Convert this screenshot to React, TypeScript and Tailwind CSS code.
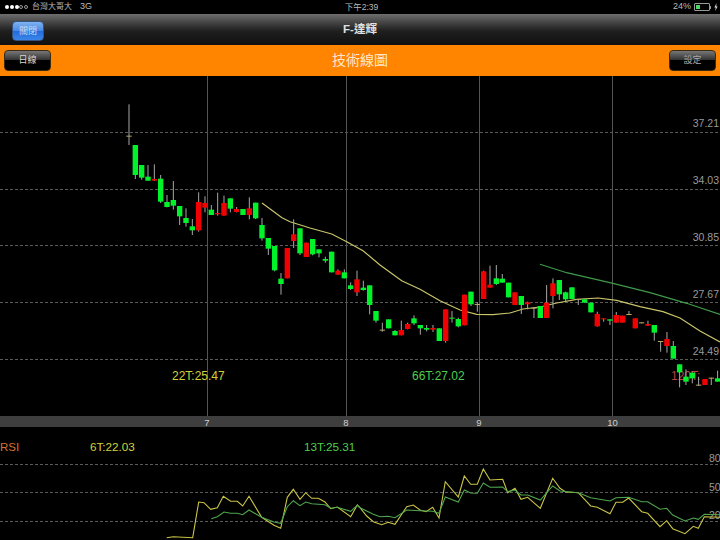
import React from "react";

const FONT = "font-['Liberation_Sans','Noto_Sans_CJK_TC',sans-serif]";
const UP = "#00f22a";
const DOWN = "#f00000";
const TAN = "#b5a66a";

// [x, wickTop, wickBottom, bodyTop, bodyBottom, colour] in page pixels
type Candle = [number, number, number, number, number, string];

// values below are read off the 3x crops, so convert them back
const fromCrop = (oy: number, rows: [number, number, number, number, string][], startX: number): Candle[] =>
  rows.map((r, i) => [startX + i * 6.333, oy + r[0] / 3, oy + r[1] / 3, oy + r[2] / 3, oy + r[3] / 3, r[4]]);

const candles: Candle[] = [
  ...fromCrop(95, [
    [28, 150, 122, 124, TAN],
    [150, 252, 150, 240, UP],
    [210, 254, 210, 248, UP],
    [210, 258, 245, 257, UP],
    [208, 258, 252, 257, DOWN],
    [240, 324, 251, 320, UP],
    [300, 337, 321, 336, UP],
    [258, 344, 315, 332, UP],
    [333, 390, 333, 364, UP],
    [340, 395, 369, 384, UP],
    [372, 420, 394, 406, UP],
    [292, 410, 321, 406, DOWN],
    [304, 352, 324, 338, DOWN],
    [330, 360, 344, 360, UP],
    [293, 362, 354, 358, DOWN],
    [302, 362, 324, 362, DOWN],
    [310, 352, 310, 341, UP],
    [336, 352, 342, 351, DOWN],
    [342, 360, 342, 360, UP],
    [307, 373, 340, 360, DOWN],
    [323, 372, 323, 370, UP],
    [369, 437, 390, 430, UP],
    [429, 480, 429, 461, UP],
    [453, 529, 453, 526, UP],
    [534, 599, 551, 567, UP],
    [459, 550, 459, 550, DOWN],
    [373, 459, 418, 438, DOWN],
  ], 129),
  ...fromCrop(210, [
    [55, 135, 55, 130, UP],
    [98, 141, 98, 141, DOWN],
    [87, 136, 87, 133, UP],
    [118, 142, 118, 130, UP],
    [140, 158, 147, 152, UP],
    [125, 187, 125, 187, UP],
    [178, 195, 182, 194, DOWN],
    [178, 205, 187, 205, UP],
    [217, 240, 226, 237, UP],
    [182, 258, 208, 247, DOWN],
    [212, 242, 233, 240, UP],
    [226, 313, 226, 285, UP],
    [303, 338, 303, 332, UP],
    [338, 365, 359, 361, TAN],
    [328, 355, 328, 355, UP],
    [360, 376, 363, 376, UP],
    [332, 376, 360, 376, DOWN],
    [338, 358, 342, 357, DOWN],
    [316, 345, 325, 340, UP],
    [345, 374, 345, 355, UP],
    [345, 364, 354, 359, UP],
    [345, 366, 354, 359, DOWN],
    [355, 393, 355, 393, UP],
    [298, 398, 298, 393, DOWN],
    [303, 338, 323, 326, UP],
    [323, 352, 327, 349, UP],
    [254, 346, 254, 346, DOWN],
    [245, 288, 245, 283, UP],
    [277, 305, 282, 285, TAN],
    [182, 267, 184, 267, DOWN],
    [167, 233, 224, 233, DOWN],
    [165, 225, 205, 222, UP],
  ], 300),
  ...fromCrop(250, [
    [72, 98, 86, 98, UP],
    [98, 142, 98, 142, UP],
    [127, 165, 127, 165, DOWN],
    [138, 192, 138, 165, UP],
    [155, 178, 157, 163, DOWN],
    [172, 204, 173, 176, TAN],
    [168, 204, 168, 204, UP],
    [105, 204, 158, 204, DOWN],
    [85, 175, 100, 138, DOWN],
    [90, 150, 90, 133, UP],
    [125, 155, 127, 148, UP],
    [112, 148, 112, 147, UP],
    [147, 165, 147, 149, TAN],
    [148, 158, 148, 158, UP],
    [158, 187, 158, 187, UP],
    [185, 230, 192, 229, DOWN],
    [205, 215, 205, 207, DOWN],
    [208, 225, 208, 212, UP],
    [186, 218, 195, 218, DOWN],
    [197, 218, 197, 218, DOWN],
    [183, 193, 192, 194, TAN],
    [205, 235, 205, 235, DOWN],
    [217, 220, 217, 220, TAN],
    [212, 228, 222, 227, DOWN],
    [225, 272, 225, 248, UP],
    [273, 305, 273, 275, TAN],
    [246, 308, 267, 288, DOWN],
    [273, 326, 288, 326, UP],
    [343, 412, 343, 367, UP],
    [358, 405, 380, 395, UP],
    [365, 400, 368, 385, UP],
    [380, 407, 404, 407, TAN],
    [387, 405, 387, 405, DOWN],
    [383, 405, 383, 385, TAN],
    [362, 395, 385, 395, UP],
  ], 502.3),
];

const crop = (ox: number, oy: number, pts: number[][]) =>
  pts.map((p) => `${(ox + p[0] / 3).toFixed(1)},${(oy + p[1] / 3).toFixed(1)}`).join(" ");

const ma22 =
  "262,203 282,217.7 290,221.7 310,228 331.7,234 346.7,241.7 363,250.7 380,265 401.7,280.7 420,289.3 440,300.7 460,310 476.7,314.3 493,314.7 510,313 523,309 540,307 556.7,303 576.7,299.3 598,298 616.7,300.3 640,306.7 663,311.7 680,318 700,331 720,342";
const ma66 = "540,264.3 566.7,272.7 613,283.3 650,292.7 686.7,303.3 720,314.5";

const rsi6 =
  crop(0, 410, [[500, 383], [520, 380], [578, 383], [596, 276], [612, 278], [632, 298], [652, 293], [670, 259], [692, 274], [712, 274], [728, 288], [747, 259], [785, 322], [822, 346], [842, 355], [862, 262], [880, 238], [900, 268], [917, 248], [935, 265], [955, 265], [975, 276], [992, 296], [1012, 291], [1052, 320], [1072, 285]]) +
  " " +
  crop(360, 410, [[0, 293], [20, 318], [40, 335], [65, 344], [85, 337], [105, 343], [140, 290], [160, 285], [180, 300], [198, 305], [218, 292], [237, 324], [256, 215], [295, 261], [313, 198], [332, 223], [352, 223], [370, 177], [390, 210], [428, 208], [443, 248], [465, 235], [483, 268], [503, 262], [541, 295], [578, 205], [600, 235], [617, 246], [655, 248], [692, 288], [712, 292], [750, 311], [768, 277], [788, 277], [806, 264], [845, 305], [863, 310], [900, 350], [920, 332], [938, 356], [975, 371], [1000, 349], [1015, 355], [1033, 320], [1080, 322]]);

const rsi13 =
  crop(0, 410, [[634, 326], [652, 320], [672, 306], [692, 310], [712, 310], [728, 314], [747, 300], [785, 322], [822, 336], [842, 340], [862, 290], [880, 272], [900, 287], [917, 276], [935, 281], [975, 284], [992, 295], [1012, 292], [1052, 304], [1072, 286]]) +
  " " +
  crop(360, 410, [[0, 293], [40, 313], [60, 320], [85, 319], [105, 323], [140, 300], [180, 302], [218, 304], [237, 310], [256, 261], [295, 276], [313, 240], [332, 249], [352, 250], [370, 219], [390, 232], [428, 231], [443, 245], [465, 240], [483, 255], [503, 255], [541, 270], [578, 228], [600, 243], [655, 248], [692, 263], [750, 273], [768, 263], [806, 262], [845, 275], [863, 275], [900, 298], [920, 295], [938, 315], [975, 333], [1000, 324], [1015, 328], [1033, 313], [1080, 314]]);

const vLines = [207.5, 346.5, 479.5, 612.5];
const hLines = [132.5, 189.5, 245.5, 302.5, 359.5];
const prices = [
  ["37.21", 127],
  ["34.03", 184],
  ["30.85", 241],
  ["27.67", 298],
  ["24.49", 355],
] as const;
const dates = [
  ["7", 207],
  ["8", 346],
  ["9", 479],
  ["10", 612.5],
] as const;

const BlackButton = ({ label, className }: { label: string; className: string }) => (
  <button
    type="button"
    className={`h-[21px] rounded-[4px] border border-[#3a2a10] bg-[linear-gradient(#777_0%,#303030_48%,#000_50%,#000_100%)] text-[9px] leading-none ${className}`}
  >
    {label}
  </button>
);

export default function App() {
  return (
    <div className={`flex h-[540px] w-[720px] flex-col overflow-hidden bg-black ${FONT}`}>
      <div className="flex h-[14px] items-center justify-between pl-[5px] pr-[2px] text-[9px] text-[#b8b8b8]">
        <div className="flex w-[200px] items-center gap-[4px]">
          <span className="flex items-center gap-[0.75px]">
            <i className="h-[4px] w-[4px] rounded-full bg-white" />
            <i className="h-[4px] w-[4px] rounded-full bg-white" />
            <i className="h-[4px] w-[4px] rounded-full bg-white" />
            <i className="h-[4px] w-[4px] rounded-full border-[0.5px] border-[#999]" />
            <i className="h-[4px] w-[4px] rounded-full border-[0.5px] border-[#999]" />
          </span>
          <span className="text-[8px]">台灣大哥大</span>
          <span className="ml-[4px]">3G</span>
        </div>
        <span className="text-[8.5px]">下午2:39</span>
        <div className="flex w-[200px] items-center justify-end gap-[3px]">
          <span>24%</span>
          <span className="flex h-[8px] w-[16px] rounded-[1px] border border-[#999] p-px">
            <i className="h-full w-[4px] bg-[#4cd964]" />
          </span>
          <span className="-ml-[3px] h-[3px] w-px bg-[#999]" />
          <svg width="4" height="8" viewBox="0 0 4 8">
            <path d="M2.6 0 0.4 4.4H1.8L1.2 8 3.6 3.4H2.2Z" fill="#ddd" />
          </svg>
        </div>
      </div>

      <div className="relative flex h-[31px] items-center justify-center bg-linear-to-b from-[#6e6e6e] via-[#1f1f1f] via-55% to-[#101010]">
        <button
          type="button"
          className="absolute left-[12px] top-[7px] h-[20px] w-[32px] rounded-[4px] border border-[#35527f] bg-[linear-gradient(#7fb2ee_0%,#4a8ae6_48%,#1f6ae0_50%,#3c86e8_100%)] text-[9px] leading-none text-[#c9d8ee]"
        >
          關閉
        </button>
        <span className="text-[11.5px] font-bold text-[#e0e0e0]">F-達輝</span>
      </div>

      <div className="flex h-[31px] items-center justify-between bg-[#ff8400] px-[4px]">
        <BlackButton label="日線" className="w-[47px] text-[#d8d8d8]" />
        <span className="text-[14px] text-[#ffe9cc]">技術線圖</span>
        <BlackButton label="設定" className="w-[47px] text-[#a8a8a8]" />
      </div>

      <svg className="block shrink-0" width="720" height="340" viewBox="0 76 720 340">
        {hLines.map((y) => (
          <line key={y} x1="0" x2="720" y1={y} y2={y} stroke="#5a5a5a" strokeDasharray="3 2" />
        ))}
        {vLines.map((x) => (
          <line key={x} x1={x} x2={x} y1="76" y2="416" stroke="#555" />
        ))}
        {prices.map(([label, y]) => (
          <text key={label} x="719" y={y} textAnchor="end" fontSize="10.5" fill="#9a9a9a">
            {label}
          </text>
        ))}
        <text x="172" y="380" fontSize="12" fill="#d4d23a">22T:25.47</text>
        <text x="412" y="380" fontSize="12" fill="#4ccf4c">66T:27.02</text>
        <text x="671" y="380" fontSize="12" fill="#b84040">120T:</text>
        <polyline points={ma22} fill="none" stroke="#c8c46a" strokeWidth="1.2" />
        <polyline points={ma66} fill="none" stroke="#3f9a4a" strokeWidth="1.2" />
        {candles.map(([x, wt, wb, bt, bb, color]) => (
          <g key={x}>
            <line x1={x} x2={x} y1={wt} y2={wb} stroke="#a8a8a8" strokeWidth="1" />
            <rect x={x - 2.7} y={bt} width="5.4" height={Math.max(bb - bt, 1)} fill={color} />
          </g>
        ))}
      </svg>

      <svg className="block shrink-0 bg-[#3e3e3e]" width="720" height="11" viewBox="0 0 720 11">
        {dates.map(([label, x]) => (
          <text key={label} x={x} y="9.5" textAnchor="middle" fontSize="9.5" fill="#cfcfcf">
            {label}
          </text>
        ))}
      </svg>

      <svg className="block shrink-0" width="720" height="113" viewBox="0 427 720 113">
        {[464.5, 492.5, 521.5].map((y) => (
          <line key={y} x1="0" x2="720" y1={y} y2={y} stroke="#5a5a5a" strokeDasharray="3 2" />
        ))}
        <text x="0" y="451" fontSize="11.5" fill="#d9702a">RSI</text>
        <text x="90" y="451" fontSize="11.7" fill="#d4d23a">6T:22.03</text>
        <text x="304" y="451" fontSize="11.7" fill="#4ccf4c">13T:25.31</text>
        <text x="709" y="462" fontSize="10.5" fill="#9a9a9a">80</text>
        <text x="709" y="491" fontSize="10.5" fill="#9a9a9a">50</text>
        <text x="709" y="519" fontSize="10.5" fill="#9a9a9a">20</text>
        <polyline points={rsi6} fill="none" stroke="#c9c447" strokeWidth="1.1" />
        <polyline points={rsi13} fill="none" stroke="#4ea64e" strokeWidth="1.1" />
      </svg>
    </div>
  );
}
